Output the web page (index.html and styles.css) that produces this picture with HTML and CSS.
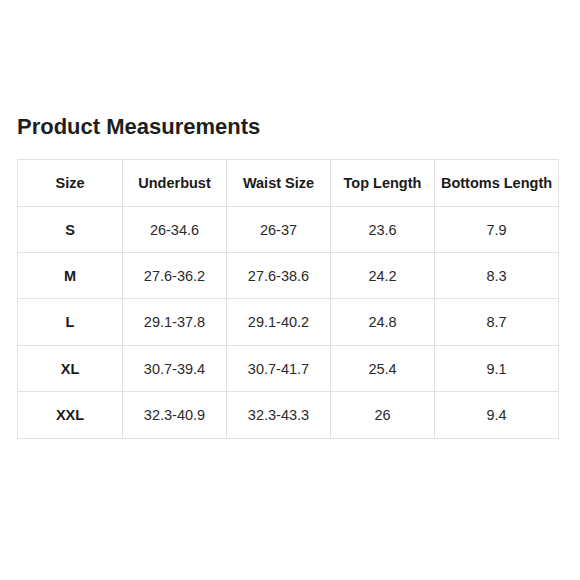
FILE: index.html
```html
<!DOCTYPE html>
<html>
<head>
<meta charset="utf-8">
<link rel="stylesheet" href="styles.css">
</head>
<body>
<div class="page">
  <h1 class="title">Product Measurements</h1>
  <table class="chart">
    <colgroup>
      <col class="c1"><col class="c2"><col class="c3"><col class="c4"><col class="c5">
    </colgroup>
    <thead>
      <tr><th>Size</th><th>Underbust</th><th>Waist Size</th><th>Top Length</th><th>Bottoms Length</th></tr>
    </thead>
    <tbody>
      <tr><th>S</th><td>26-34.6</td><td>26-37</td><td>23.6</td><td>7.9</td></tr>
      <tr><th>M</th><td>27.6-36.2</td><td>27.6-38.6</td><td>24.2</td><td>8.3</td></tr>
      <tr><th>L</th><td>29.1-37.8</td><td>29.1-40.2</td><td>24.8</td><td>8.7</td></tr>
      <tr><th>XL</th><td>30.7-39.4</td><td>30.7-41.7</td><td>25.4</td><td>9.1</td></tr>
      <tr><th>XXL</th><td>32.3-40.9</td><td>32.3-43.3</td><td>26</td><td>9.4</td></tr>
    </tbody>
  </table>
</div>
</body>
</html>
```
FILE: styles.css
```css
html, body {
  margin: 0;
  padding: 0;
  background: #ffffff;
}
body {
  font-family: "Liberation Sans", Arial, sans-serif;
  color: #222222;
}
.page {
  padding: 114px 0 0 17px;
}
.title {
  margin: 0 0 20px 0;
  font-size: 22px;
  line-height: 25px;
  font-weight: bold;
  color: #1e1e1e;
}
.chart {
  border-collapse: collapse;
  table-layout: fixed;
  width: 541px;
}
.c1 { width: 105px; }
.c2 { width: 104px; }
.c3 { width: 104px; }
.c4 { width: 104px; }
.c5 { width: 124px; }
.chart th, .chart td {
  border: 1px solid #e2e2e2;
  height: 47px;
  padding: 0;
  text-align: center;
  vertical-align: middle;
  font-size: 14.5px;
  box-sizing: border-box;
}
.chart tbody tr:nth-child(2) th,
.chart tbody tr:nth-child(2) td,
.chart tbody tr:nth-child(4) th,
.chart tbody tr:nth-child(4) td,
.chart tbody tr:nth-child(1) th,
.chart tbody tr:nth-child(1) td {
  height: 46px;
}
.chart th {
  font-weight: bold;
  color: #1a1a1a;
}
.chart td {
  font-weight: normal;
  color: #2a2a2a;
}
```
